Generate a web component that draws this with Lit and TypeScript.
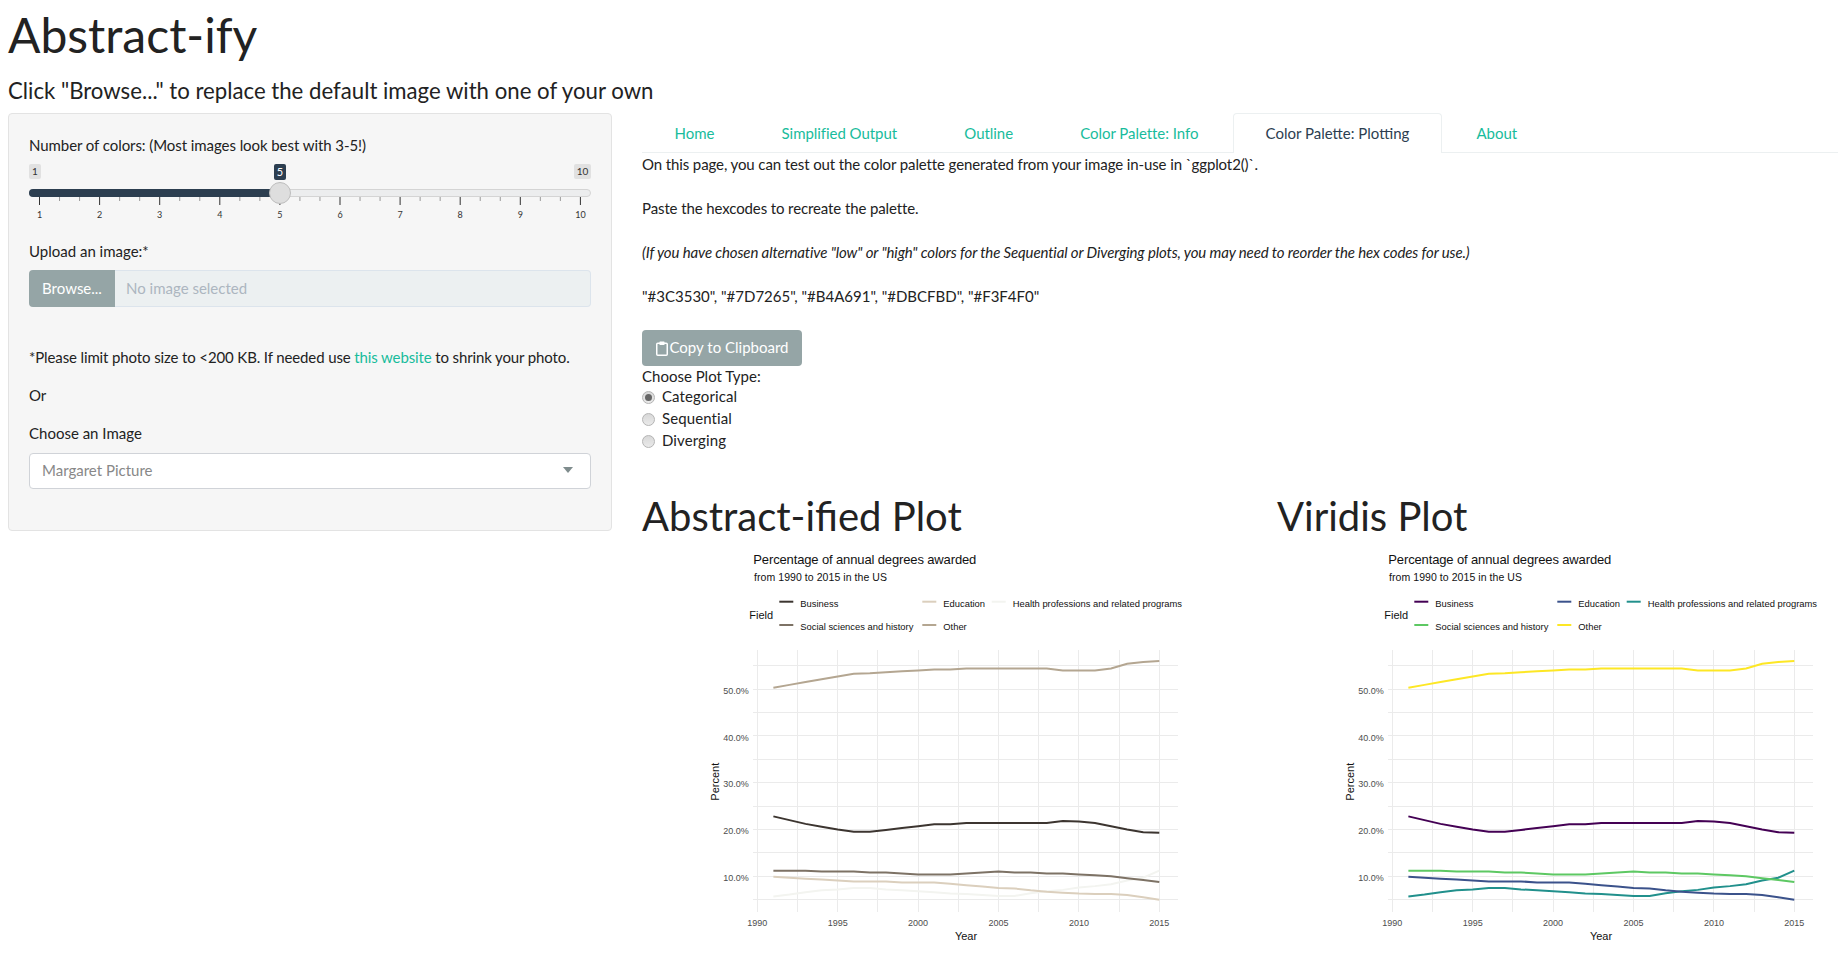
import { LitElement, html, svg, css } from 'lit';
import { customElement, property } from 'lit/decorators.js';

const years = Array.from({ length: 25 }, (_, i) => 1991 + i);

const series: Record<string, number[]> = {
  other: [50.3, 50.9, 51.5, 52.1, 52.7, 53.3, 53.4, 53.6, 53.8, 54, 54.2, 54.2, 54.4, 54.4, 54.4, 54.4, 54.4, 54.4, 54, 54, 54, 54.4, 55.4, 55.8, 56],
  business: [22.8, 22, 21.2, 20.6, 20, 19.5, 19.5, 19.9, 20.3, 20.7, 21.1, 21.1, 21.4, 21.4, 21.4, 21.4, 21.4, 21.4, 21.8, 21.7, 21.4, 20.7, 20, 19.4, 19.3],
  social: [11.2, 11.2, 11.2, 11, 11, 11, 10.8, 10.8, 10.6, 10.4, 10.4, 10.4, 10.6, 10.8, 11, 10.8, 10.8, 10.6, 10.6, 10.4, 10.2, 10, 9.6, 9.2, 8.8],
  education: [9.9, 9.7, 9.5, 9.3, 9.1, 8.9, 8.9, 8.9, 8.7, 8.7, 8.7, 8.4, 8.1, 7.8, 7.5, 7.4, 7, 6.7, 6.5, 6.3, 6.2, 6.2, 6, 5.5, 5],
  health: [5.7, 6.1, 6.6, 7, 7.2, 7.5, 7.5, 7.2, 7, 6.8, 6.6, 6.3, 6.2, 6, 5.8, 5.8, 6.4, 6.8, 7.1, 7.6, 7.9, 8.3, 9.1, 9.7, 11.2],
};

const px = (yr: number) => 57.3 + (yr - 1990) * 16.08;
const py = (p: number) => 336.3 - (p - 10) * 4.68;

@customElement('plot-chart')
class PlotChart extends LitElement {
  @property({ type: Object }) colors: Record<string, string> = {};

  static styles = css`
    :host { display: block; }
    svg { display: block; font-family: "Liberation Sans", Arial, sans-serif; }
    .grid { stroke: #ebebeb; stroke-width: 1; shape-rendering: crispEdges; }
    .line { fill: none; stroke-width: 2; }
    .key { stroke-width: 2; }
    .title { font-size: 13px; fill: #111; }
    .sub { font-size: 10.5px; fill: #111; }
    .legend { font-size: 9.4px; fill: #111; }
    .name { font-size: 11px; fill: #111; }
    .tick { font-size: 9px; fill: #4d4d4d; }
  `;

  render() {
    const c = this.colors;
    const vert = Array.from({ length: 11 }, (_, i) => 1990 + i * 2.5);
    const horiz = Array.from({ length: 11 }, (_, i) => 5 + i * 5);
    const legend: [number, number, string, string][] = [
      [79.3, 61.7, 'business', 'Business'],
      [222.3, 61.7, 'education', 'Education'],
      [291.7, 61.7, 'health', 'Health professions and related programs'],
      [79.3, 85, 'social', 'Social sciences and history'],
      [222.3, 85, 'other', 'Other'],
    ];
    return html`
      <svg width="561" height="410" viewBox="0 0 561 410">
        <text class="title" x="53.3" y="23.5" textLength="223">Percentage of annual degrees awarded</text>
        <text class="sub" x="54" y="40.7" textLength="133">from 1990 to 2015 in the US</text>
        <text class="name" x="49.3" y="79">Field</text>
        ${legend.map(([x, y, k, label]) => svg`
          <line class="key" x1=${x} x2=${x + 14} y1=${y} y2=${y} stroke=${c[k]}></line>
          <text class="legend" x=${x + 21} y=${y + 5.2}>${label}</text>
        `)}
        ${vert.map(v => svg`<line class="grid" x1=${px(v)} x2=${px(v)} y1="110" y2="371.7"></line>`)}
        ${horiz.map(h => svg`<line class="grid" x1="52.7" x2="477.7" y1=${py(h)} y2=${py(h)}></line>`)}
        ${[10, 20, 30, 40, 50].map(t => svg`<text class="tick" x="48.7" y=${py(t) + 4.6} text-anchor="end">${t}.0%</text>`)}
        ${[1990, 1995, 2000, 2005, 2010, 2015].map(t => svg`<text class="tick" x=${px(t)} y="385.7" text-anchor="middle">${t}</text>`)}
        ${['health', 'education', 'social', 'business', 'other'].map(k => svg`
          <polyline class="line" stroke=${c[k]} points=${series[k].map((v, i) => `${px(years[i])},${py(v)}`).join(' ')}></polyline>
        `)}
        <text class="name" x="266" y="400.3" text-anchor="middle">Year</text>
        <text class="name" transform="translate(19 241.7) rotate(-90)" text-anchor="middle">Percent</text>
      </svg>
    `;
  }
}

const abstractColors = { business: '#3C3530', social: '#7D7265', other: '#B4A691', education: '#DBCFBD', health: '#F3F4F0' };
const viridisColors = { business: '#440154', education: '#3B528B', health: '#21908C', social: '#5DC863', other: '#FDE725' };

@customElement('app-root')
class AppRoot extends LitElement {
  static styles = css`
    :host {
      display: block;
      height: 953px;
      overflow: hidden;
      background: #fff;
      font-family: Lato, "Open Sans", sans-serif;
      font-size: 15px;
      line-height: 21.4px;
      color: #222;
    }
    .page { padding: 0 0 0 8px; }
    h1 { margin: 0; font-weight: 400; font-size: 48px; line-height: 70px; }
    .tagline { margin: 0 0 1px; font-weight: 400; font-size: 22.2px; line-height: 42px; }
    .layout { display: flex; align-items: flex-start; }
    .well {
      box-sizing: border-box;
      flex: none;
      width: 604px;
      height: 418px;
      padding: 21px 20px 0;
      background: #f6f6f6;
      border: 1px solid #e3e3e3;
      border-radius: 4px;
    }
    label, .plain { display: block; margin: 0; }
    .tight { letter-spacing: -0.07px; }
    .slider { display: block; margin-top: 8px; }
    .slider text { font-family: Lato, sans-serif; }
    .upload-label { margin-top: 19px; }
    .file { display: flex; height: 37px; margin-top: 7px; }
    .browse {
      display: flex; align-items: center; justify-content: center;
      width: 86px; background: #95a5a6; color: #fff; border-radius: 4px 0 0 4px;
    }
    .file-name {
      flex: 1; display: flex; align-items: center; padding-left: 11px;
      background: #ecf0f1; color: #acb6c0;
      border: 1px solid #dce4ec; border-left: 0; border-radius: 0 4px 4px 0;
    }
    .limit { margin: 40px 0 17px; letter-spacing: -0.125px; }
    .limit a { color: #18bc9c; text-decoration: none; }
    .or { margin: 0 0 16.5px; }
    .select {
      box-sizing: border-box;
      display: flex; align-items: center; justify-content: space-between;
      height: 36px; margin-top: 8.5px; padding: 0 17px 0 12px;
      background: #fff; color: #888; border: 1px solid #d0d3d8; border-radius: 4px;
    }
    .caret { border: 5px solid transparent; border-top: 6px solid #7f8c8d; border-bottom: 0; margin-top: -2px; }
    .main { flex: none; width: 1196px; margin-left: 30px; }
    .tabs { display: flex; height: 39px; border-bottom: 1px solid #ecf0f1; }
    .tab {
      height: 21px; padding: 9px 31.6px; margin-right: 2px; color: #18bc9c;
      letter-spacing: -0.05px;
      border: 1px solid transparent; border-bottom: 0;
    }
    .tab.active {
      color: #2c3e50; background: #fff; letter-spacing: 0;
      border-color: #ecf0f1; border-radius: 4px 4px 0 0;
    }
    .copy { margin: 1px 0 22px; }
    .copy p { margin: 0 0 22.6px; letter-spacing: -0.11px; }
    .copy em { font-style: italic; letter-spacing: -0.13px; }
    .copy p.hex { letter-spacing: 0; }
    .btn {
      display: flex; align-items: center; justify-content: center; gap: 2px;
      box-sizing: border-box; width: 160px; height: 36px;
      background: #95a5a6; color: #fff; border-radius: 4px;
    }
    .type { line-height: 20px; }
    .radio { display: flex; align-items: center; gap: 7px; height: 22px; letter-spacing: 0.1px; }
    .radio i {
      box-sizing: border-box; width: 13px; height: 13px; flex: none;
      display: flex; align-items: center; justify-content: center;
      border-radius: 50%; border: 1px solid #b4b4b4;
      background: linear-gradient(#d8d8d8, #eaeaea);
    }
    .radio i.on::after { content: ""; width: 7px; height: 7px; border-radius: 50%; background: #666; }
    .plots { display: grid; grid-template-columns: 635px 561px; margin-top: 41.6px; }
    h2 { margin: 0 0 2px; font-weight: 400; font-size: 40px; line-height: 44px; }
    plot-chart { margin-left: 58px; }
  `;

  renderSlider() {
    const tickX = (i: number) => 10.5 + i * 60.1;
    const majors = Array.from({ length: 10 }, (_, i) => i);
    const minors = Array.from({ length: 27 }, (_, i) => i / 3).filter((_, i) => i % 3 !== 0);
    return html`
      <svg class="slider" width="562" height="58" viewBox="0 0 562 58">
        <rect x="0" y="0" width="12" height="15" rx="2" fill="#e1e1e1"></rect>
        <text x="6" y="11" font-size="10" text-anchor="middle" fill="#333">1</text>
        <rect x="545" y="0" width="17" height="15" rx="2" fill="#e1e1e1"></rect>
        <text x="553.5" y="11" font-size="10" text-anchor="middle" fill="#333">10</text>
        <rect x="0.5" y="25.5" width="561" height="7" rx="3.5" fill="#ecedee" stroke="#d4d4d4"></rect>
        <rect x="0" y="25" width="251" height="8" rx="4" fill="#2c3e50"></rect>
        ${majors.map(i => svg`
          <line x1=${tickX(i)} x2=${tickX(i)} y1="33" y2="41" stroke="#333"></line>
          <text x=${tickX(i)} y="54" font-size="9" text-anchor="middle" fill="#333">${i + 1}</text>
        `)}
        ${minors.map(m => svg`<line x1=${tickX(m)} x2=${tickX(m)} y1="33" y2="37" stroke="#999"></line>`)}
        <rect x="245" y="0" width="12" height="16" rx="2" fill="#2c3e50"></rect>
        <text x="251" y="12" font-size="11" text-anchor="middle" fill="#fff">5</text>
        <circle cx="251" cy="29" r="10.5" fill="#dedede" stroke="#bdbdbd"></circle>
      </svg>
    `;
  }

  render() {
    return html`
      <div class="page">
        <h1>Abstract-ify</h1>
        <h3 class="tagline">Click "Browse..." to replace the default image with one of your own</h3>
        <div class="layout">
          <div class="well">
            <label class="tight">Number of colors: (Most images look best with 3-5!)</label>
            ${this.renderSlider()}
            <label class="upload-label">Upload an image:*</label>
            <div class="file">
              <div class="browse">Browse...</div>
              <div class="file-name">No image selected</div>
            </div>
            <p class="plain limit">*Please limit photo size to &lt;200 KB. If needed use <a href="#">this website</a> to shrink your photo.</p>
            <p class="plain or">Or</p>
            <label>Choose an Image</label>
            <div class="select"><span>Margaret Picture</span><span class="caret"></span></div>
          </div>
          <div class="main">
            <div class="tabs">
              <div class="tab">Home</div>
              <div class="tab">Simplified Output</div>
              <div class="tab">Outline</div>
              <div class="tab">Color Palette: Info</div>
              <div class="tab active">Color Palette: Plotting</div>
              <div class="tab">About</div>
            </div>
            <div class="copy">
              <p>On this page, you can test out the color palette generated from your image in-use in \`ggplot2()\`.</p>
              <p>Paste the hexcodes to recreate the palette.</p>
              <p><em>(If you have chosen alternative "low" or "high" colors for the Sequential or Diverging plots, you may need to reorder the hex codes for use.)</em></p>
              <p class="hex">"#3C3530", "#7D7265", "#B4A691", "#DBCFBD", "#F3F4F0"</p>
            </div>
            <div class="btn">
              <svg width="12" height="15" viewBox="0 0 12 15" fill="none" stroke="#fff">
                <rect x="0.75" y="2.25" width="10.5" height="12" rx="1" stroke-width="1.5"></rect>
                <rect x="3.5" y="0.5" width="5" height="3.5" rx="0.5" fill="#fff" stroke="none"></rect>
              </svg>
              <span>Copy to Clipboard</span>
            </div>
            <div class="type">Choose Plot Type:</div>
            <div class="radio"><i class="on"></i>Categorical</div>
            <div class="radio"><i></i>Sequential</div>
            <div class="radio"><i></i>Diverging</div>
            <div class="plots">
              <div>
                <h2>Abstract-ified Plot</h2>
                <plot-chart .colors=${abstractColors}></plot-chart>
              </div>
              <div>
                <h2>Viridis Plot</h2>
                <plot-chart .colors=${viridisColors}></plot-chart>
              </div>
            </div>
          </div>
        </div>
      </div>
    `;
  }
}
